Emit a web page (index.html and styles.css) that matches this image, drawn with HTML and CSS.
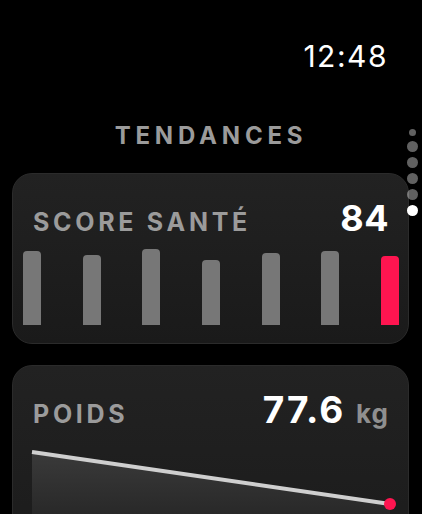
FILE: index.html
```html
<!DOCTYPE html>
<html lang="fr">
<head>
<meta charset="utf-8">
<title>Tendances</title>
<link rel="stylesheet" href="styles.css">
</head>
<body>
<div class="screen">
  <div class="status"><span class="time">12:48</span></div>
  <h1 class="title">TENDANCES</h1>
  <div class="cards">
    <section class="card">
      <div class="card-head">
        <span class="label">SCORE SANTÉ</span>
        <span class="value">84</span>
      </div>
      <div class="bars">
        <div class="bar" style="height:74px"></div>
        <div class="bar" style="height:70px"></div>
        <div class="bar" style="height:76px"></div>
        <div class="bar" style="height:65px"></div>
        <div class="bar" style="height:72px"></div>
        <div class="bar" style="height:74px"></div>
        <div class="bar bar-today" style="height:69px"></div>
      </div>
    </section>
    <section class="card card-tall">
      <div class="card-head">
        <span class="label">POIDS</span>
        <span class="value value-wide">77.6 <span class="unit">kg</span></span>
      </div>
      <svg class="chart" width="395" height="80" viewBox="0 0 395 80">
        <defs>
          <linearGradient id="fill" x1="0" y1="0" x2="0" y2="1">
            <stop offset="0" stop-color="#3a3a3a"/>
            <stop offset="1" stop-color="#262626"/>
          </linearGradient>
        </defs>
        <polygon points="19,9 377,61 377,80 19,80" fill="url(#fill)"/>
        <line x1="19" y1="9" x2="377" y2="61" stroke="#cfcfcf" stroke-width="4"/>
        <circle cx="377" cy="61" r="6" fill="#ff1550"/>
      </svg>
    </section>
  </div>
  <div class="pager">
    <span class="dot dot-small"></span>
    <span class="dot"></span>
    <span class="dot"></span>
    <span class="dot"></span>
    <span class="dot"></span>
    <span class="dot dot-active"></span>
  </div>
</div>
</body>
</html>
```
FILE: styles.css
```css
html, body {
  margin: 0;
  padding: 0;
  background: #000;
}
body {
  font-family: Inter, "Noto Sans", "DejaVu Sans", sans-serif;
  color: #fff;
}
.screen {
  position: relative;
  width: 422px;
  height: 514px;
  overflow: hidden;
  background: #000;
}
.status {
  display: flex;
  justify-content: flex-end;
  padding: 41px 34px 0 0;
}
.time {
  font-size: 30px;
  line-height: 30px;
  font-weight: 400;
  letter-spacing: 1.5px;
}
.title {
  margin: 53px 0 0 0;
  text-align: center;
  font-size: 24px;
  line-height: 24px;
  font-weight: 700;
  color: #9b9b9b;
  letter-spacing: 4.8px;
  padding-left: 0;
}
.cards {
  display: flex;
  flex-direction: column;
  gap: 21px;
  margin-top: 25px;
  padding: 0 13px 0 12px;
}
.card {
  border: 1px solid #2b2b2b;
  border-radius: 20px;
  background: linear-gradient(180deg, #222222 0%, #1a1a1a 100%);
  padding: 26px 9px 18px 10px;
}
.card-tall {
  height: 200px;
  padding-bottom: 0;
  padding-top: 25px;
}
.card-head {
  display: flex;
  justify-content: space-between;
  align-items: baseline;
  padding: 0 10px 0 10px;
}
.label {
  font-size: 25px;
  line-height: 25px;
  font-weight: 700;
  color: #9b9b9b;
  letter-spacing: 3.7px;
}
.value {
  font-size: 36px;
  line-height: 36px;
  font-weight: 700;
  color: #fff;
  letter-spacing: 0.5px;
}
.value-wide {
  font-size: 37px;
  line-height: 37px;
  letter-spacing: 2px;
}
.unit {
  font-size: 26px;
  color: #8f8f8f;
  letter-spacing: 1px;
}
.bars {
  display: flex;
  justify-content: space-between;
  align-items: flex-end;
  height: 76px;
  margin-top: 13px;
}
.bar {
  width: 18px;
  background: #777777;
  border-radius: 4px 4px 0 0;
}
.bar-today {
  background: #ff1550;
}
.chart {
  display: block;
  margin: 11px 0 0 -10px;
}
.pager {
  position: absolute;
  right: 4px;
  top: 129px;
  display: flex;
  flex-direction: column;
  align-items: center;
  gap: 5px;
}
.dot {
  width: 11px;
  height: 11px;
  border-radius: 50%;
  background: rgba(255, 255, 255, 0.38);
}
.dot-small {
  width: 7px;
  height: 7px;
}
.dot-active {
  background: #fff;
}
```
